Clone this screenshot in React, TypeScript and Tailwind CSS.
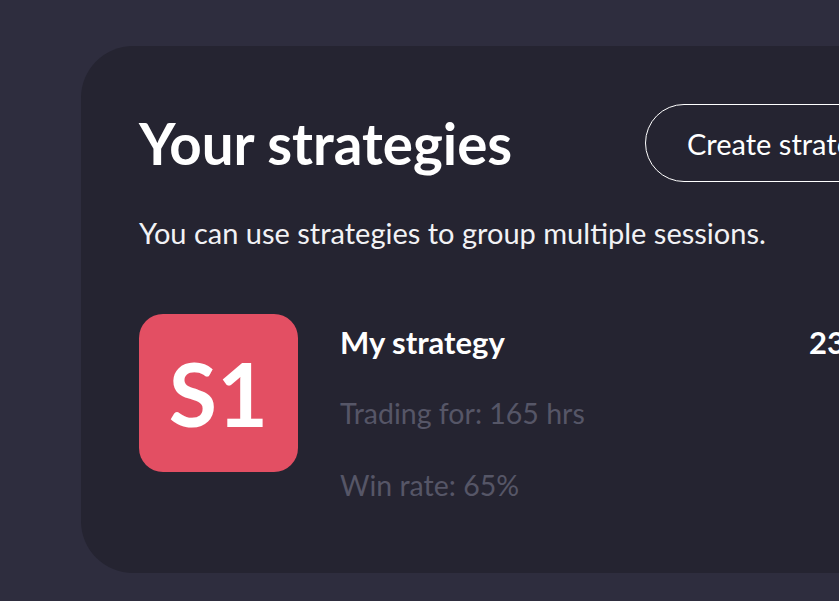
export default function App() {
  return (
    <div className="w-[839px] h-[601px] overflow-hidden bg-[#2e2d3e] pt-[46px] pl-[81px]">
      <div className="w-[900px] h-[527px] rounded-[52px] bg-[#252431] pl-[58px] pt-[58px] text-white font-['Lato',sans-serif]">
        <div className="flex items-center">
          <h1 className="w-[506px] shrink-0 font-bold text-[56.5px] leading-none">
            Your strategies
          </h1>
          <button className="h-[78px] pl-[41px] pr-[40px] rounded-full border-[1.5px] border-white text-[29px] leading-none whitespace-nowrap">
            Create strategy
          </button>
        </div>
        <p className="mt-[36px] text-[29px] leading-none text-[#f2f2f5]">
          You can use strategies to group multiple sessions.
        </p>
        <div className="mt-[67px] flex">
          <div className="w-[159px] h-[158px] shrink-0 rounded-[24px] bg-[#e34f63] flex items-center justify-center font-bold text-[88px] leading-none">
            S1
          </div>
          <div className="ml-[42px] flex flex-col">
            <div className="mt-[13px] flex">
              <span className="w-[469px] shrink-0 font-bold text-[31px] leading-none">My strategy</span>
              <span className="font-bold text-[31px] leading-none">23</span>
            </div>
            <span className="mt-[41px] text-[28.5px] text-[#565667] leading-none">Trading for: 165 hrs</span>
            <span className="mt-[43px] text-[28.5px] text-[#565667] leading-none">Win rate: 65%</span>
          </div>
        </div>
      </div>
    </div>
  );
}
